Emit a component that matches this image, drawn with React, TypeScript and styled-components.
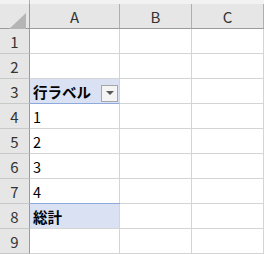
import React from 'react';
import styled, { createGlobalStyle, css } from 'styled-components';

const GlobalStyle = createGlobalStyle`
  html, body {
    margin: 0;
    padding: 0;
    background: #ffffff;
  }
  body {
    font-family: "Noto Sans CJK JP", "Noto Sans", sans-serif;
  }
`;

const Sheet = styled.div`
  display: grid;
  grid-template-columns: 30px 90px 72px 72px;
  grid-template-rows: 4px 25px repeat(9, 25px);
  width: 264px;
  height: 254px;
  overflow: hidden;
  background: #ffffff;
`;

const Strip = styled.div<{ $edge?: boolean }>`
  background: #f2f2f2;
  box-sizing: border-box;
  border-right: ${(p) => (p.$edge ? '1px solid #b0b0b0' : 'none')};
`;

const Corner = styled.div`
  position: relative;
  background: #e6e6e6;
  box-sizing: border-box;
  border-right: 1px solid #9b9b9b;
  border-bottom: 1px solid #9b9b9b;
`;

const CornerTriangle = styled.div`
  position: absolute;
  left: 9px;
  top: 9px;
  width: 0;
  height: 0;
  border-style: solid;
  border-width: 0 0 16px 17px;
  border-color: transparent transparent #b5b5b5 transparent;
`;

const ColHead = styled.div`
  display: flex;
  align-items: center;
  justify-content: center;
  background: #e6e6e6;
  box-sizing: border-box;
  border-right: 1px solid #b0b0b0;
  border-bottom: 1px solid #9b9b9b;
  font-size: 15px;
  color: #333333;
`;

const RowHead = styled.div`
  display: flex;
  align-items: center;
  justify-content: center;
  background: #e6e6e6;
  box-sizing: border-box;
  border-right: 1px solid #9b9b9b;
  border-bottom: 1px solid #c8c8c8;
  font-size: 15px;
  color: #333333;
`;

const Cell = styled.div<{ $tone?: 'label' | 'total'; $bold?: boolean }>`
  position: relative;
  display: flex;
  align-items: center;
  box-sizing: border-box;
  padding-left: 3px;
  border-right: 1px solid #d4d4d4;
  border-bottom: 1px solid #d4d4d4;
  font-size: 14.5px;
  color: #000000;
  font-weight: ${(p) => (p.$bold ? 700 : 400)};
  ${(p) =>
    p.$tone === 'label' &&
    css`
      background: #d9e1f2;
      border-bottom: 1px solid #8ea9db;
    `}
  ${(p) =>
    p.$tone === 'total' &&
    css`
      background: #d9e1f2;
      box-shadow: 0 -1px 0 #8ea9db;
    `}
`;

const FilterButton = styled.div`
  position: absolute;
  right: 1px;
  top: 6px;
  width: 17px;
  height: 17px;
  box-sizing: border-box;
  border: 1px solid #a6a6a6;
  background: #f4f4f4;
  display: flex;
  align-items: center;
  justify-content: center;
`;

const Arrow = styled.div`
  width: 0;
  height: 0;
  border-left: 4px solid transparent;
  border-right: 4px solid transparent;
  border-top: 4px solid #595959;
  margin-top: -1px;
`;

const columns = ['A', 'B', 'C'];

type Row = { text?: string; tone?: 'label' | 'total'; bold?: boolean; filter?: boolean };

const rows: Row[] = [
  {},
  {},
  { text: '行ラベル', tone: 'label', bold: true, filter: true },
  { text: '1' },
  { text: '2' },
  { text: '3' },
  { text: '4' },
  { text: '総計', tone: 'total', bold: true },
  {},
];

const App: React.FC = () => (
  <>
    <GlobalStyle />
    <Sheet>
      <Strip $edge />
      <Strip />
      <Strip />
      <Strip />
      <Corner>
        <CornerTriangle />
      </Corner>
      {columns.map((c) => (
        <ColHead key={c}>{c}</ColHead>
      ))}
      {rows.map((r, i) => (
        <React.Fragment key={i}>
          <RowHead>{i + 1}</RowHead>
          <Cell $tone={r.tone} $bold={r.bold}>
            {r.text}
            {r.filter && (
              <FilterButton>
                <Arrow />
              </FilterButton>
            )}
          </Cell>
          <Cell />
          <Cell />
        </React.Fragment>
      ))}
    </Sheet>
  </>
);

export default App;
